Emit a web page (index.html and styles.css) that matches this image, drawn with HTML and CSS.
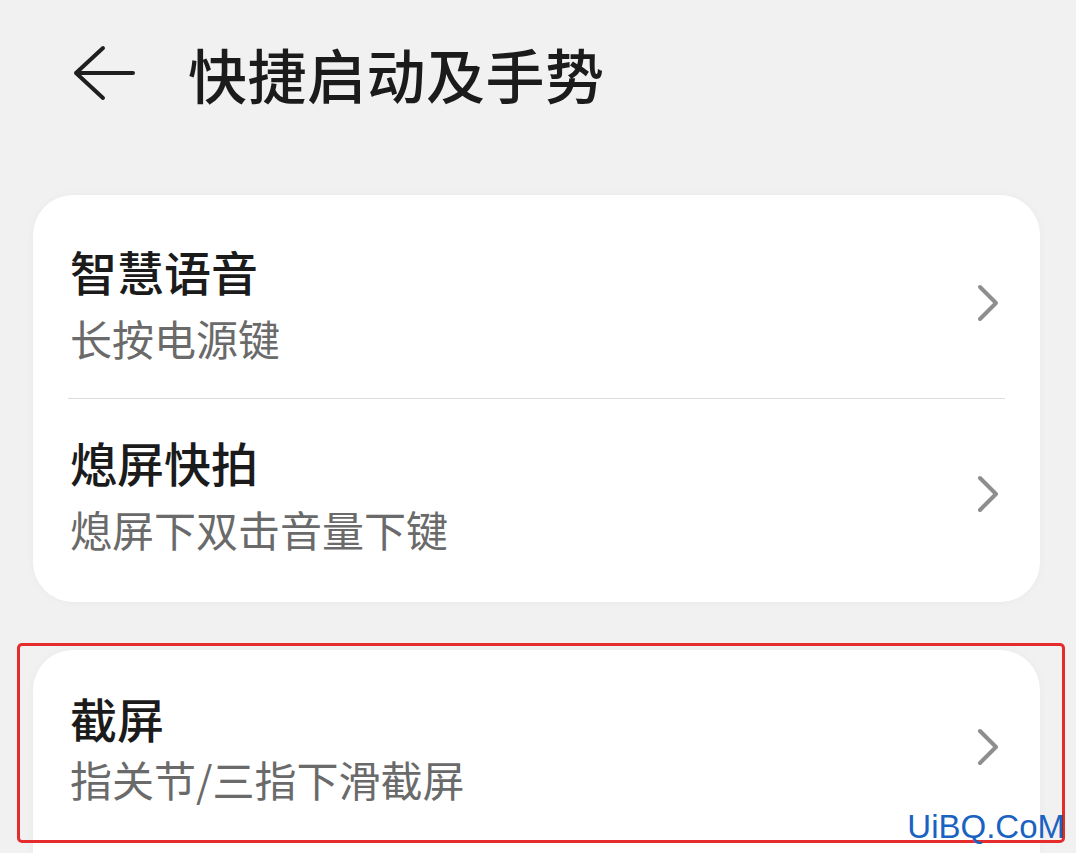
FILE: index.html
```html
<!DOCTYPE html>
<html lang="zh-CN">
<head>
    <meta charset="UTF-8" />
    <meta name="viewport" content="width=device-width, initial-scale=1.0" />
    <title>快捷启动及手势</title>
    <link rel="stylesheet" href="styles.css">
</head>
<body>

    <div class="header">
        <svg class="back-icon" width="64" height="60" viewBox="0 0 64 60">
            <path d="M31 5 L4 30 L31 55 M4 30 L61 30" />
        </svg>
        <h1 class="page-title">快捷启动及手势</h1>
    </div>

    <div class="card">
        <div class="item">
            <div class="item-text">
                <div class="item-title">智慧语音</div>
                <div class="item-sub">长按电源键</div>
            </div>
            <svg class="chevron" width="24" height="40" viewBox="0 0 24 40">
                <path d="M4 4 L20 20 L4 36" />
            </svg>
        </div>
        <div class="divider"></div>
        <div class="item">
            <div class="item-text">
                <div class="item-title">熄屏快拍</div>
                <div class="item-sub">熄屏下双击音量下键</div>
            </div>
            <svg class="chevron" width="24" height="40" viewBox="0 0 24 40">
                <path d="M4 4 L20 20 L4 36" />
            </svg>
        </div>
    </div>

    <div class="card-wrap">
        <div class="card card-last">
            <div class="item item-tight">
                <div class="item-text">
                    <div class="item-title">截屏</div>
                    <div class="item-sub">指关节/三指下滑截屏</div>
                </div>
                <svg class="chevron" width="24" height="40" viewBox="0 0 24 40">
                    <path d="M4 4 L20 20 L4 36" />
                </svg>
            </div>
        </div>
        <!-- annotation box over the screenshot item -->
        <div class="highlight"></div>
    </div>

    <div class="watermark">UiBQ.CoM</div>

</body>
</html>
```

FILE: styles.css
```css
* {
    box-sizing: border-box;
}

html, body {
    height: 100%;
    overflow: hidden;
}

body {
    margin: 0;
    background-color: #f1f1f1;
    font-family: "Noto Sans CJK SC", "Noto Sans", sans-serif;
    color: #1b1b1b;
    position: relative;
}

.header {
    height: 148px;
    display: flex;
    align-items: center;
    padding-left: 72px;
}

.back-icon {
    display: block;
    margin-top: -2px;
}

.back-icon path {
    fill: none;
    stroke: #1f1f1f;
    stroke-width: 4;
    stroke-linecap: round;
    stroke-linejoin: round;
}

.page-title {
    margin: 0 0 0 52px;
    font-size: 59px;
    font-weight: 500;
    line-height: 70px;
    letter-spacing: 0.5px;
}

.card {
    margin: 47px 36px 0 33px;
    background-color: #fff;
    border-radius: 40px;
    padding: 13px 35px 13px 37px;
    box-shadow: 0 0 10px rgba(0, 0, 0, 0.035);
}

.card-wrap {
    position: relative;
    margin-top: 48px;
}

.card-last {
    margin-top: 0;
    height: 203px;
    border-bottom-left-radius: 0;
    border-bottom-right-radius: 0;
}

.item {
    display: flex;
    align-items: center;
    justify-content: space-between;
    padding: 34px 0;
}

.item-tight {
    padding-top: 26px;
}

.item-tight .item-sub {
    margin-top: 6px;
}

.item-title {
    font-size: 47px;
    font-weight: 500;
    line-height: 58px;
}

.item-sub {
    margin-top: 12px;
    font-size: 42px;
    line-height: 52px;
    color: #6a6a6a;
}

.chevron {
    display: block;
    margin-right: 5px;
}

.chevron path {
    fill: none;
    stroke: #8e8e8e;
    stroke-width: 4;
    stroke-linecap: round;
    stroke-linejoin: round;
}

.divider {
    height: 1px;
    background-color: #dcdcdc;
    margin-left: -2px;
}

.highlight {
    position: absolute;
    left: 17px;
    right: 11px;
    top: -7px;
    height: 200px;
    border: 3px solid #e52b2b;
    border-radius: 5px;
}

.watermark {
    position: absolute;
    right: 11px;
    top: 807px;
    font-family: "Liberation Sans", Arial, sans-serif;
    font-size: 33px;
    line-height: 40px;
    color: #1a62c2;
}
```
